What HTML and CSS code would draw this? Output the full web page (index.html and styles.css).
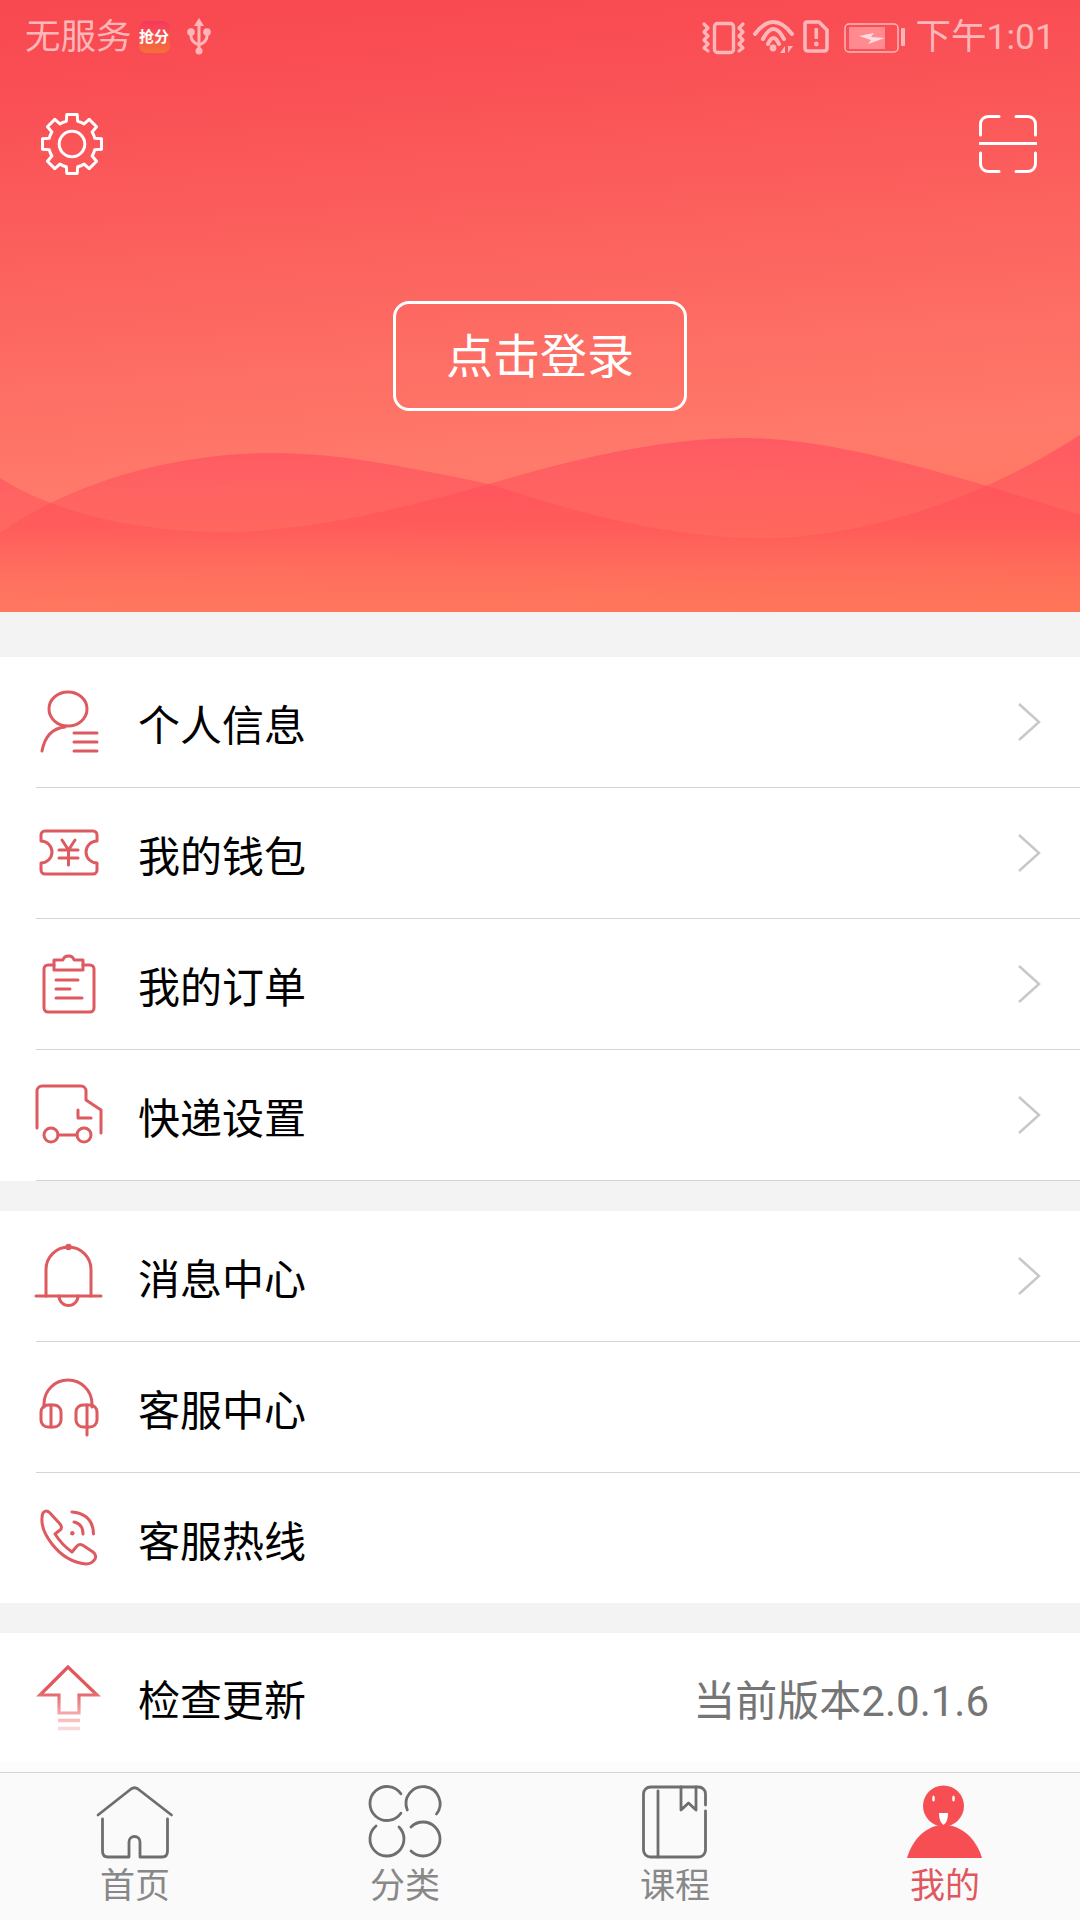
FILE: index.html
```html
<!DOCTYPE html>
<html lang="zh-CN">
<head>
  <meta charset="UTF-8" />
  <meta name="viewport" content="width=device-width, initial-scale=1.0" />
  <title>我的</title>
  <link rel="stylesheet" href="styles.css">
</head>
<body>

  <div class="page">
    <header class="header">
      <svg class="waves" viewBox="0 0 1080 612">
        <defs>
          <linearGradient id="waveFill" gradientUnits="userSpaceOnUse" x1="0" y1="430" x2="0" y2="612">
            <stop offset="0" stop-color="#ff4560" stop-opacity="0.62" />
            <stop offset="0.55" stop-color="#ff4d55" stop-opacity="0.4" />
            <stop offset="1" stop-color="#ff6a55" stop-opacity="0" />
          </linearGradient>
        </defs>
        <path fill="url(#waveFill)" d="M0 533 C60 490 160 453 275 453 C340 453 412 468 489 484 C600 520 680 538 764 538 C860 538 980 500 1080 435 V612 H0 Z" />
        <path fill="url(#waveFill)" d="M0 478 C50 510 130 532 227 532 C300 532 400 510 489 484 C570 460 660 438 744 438 C830 438 940 470 1080 515 V612 H0 Z" />
      </svg>

      <div class="status-bar">
        <div class="status-left">
          <span class="status-text">无服务</span>
          <span class="app-badge">抢分</span>
          <svg class="usb" viewBox="0 0 28 38">
            <path fill="#ffb6b8" d="M14 0 L9 8 H19 Z" />
            <circle cx="14" cy="33" r="3.5" fill="#ffb6b8" />
            <circle cx="6" cy="14" r="3.8" fill="#ffb6b8" />
            <circle cx="22" cy="14" r="3.8" fill="#ffb6b8" />
            <path fill="none" stroke="#ffb6b8" stroke-width="3" d="M14 6 V33 M6 14 V18 Q6 24 14 27 M22 14 V18 Q22 24 14 27" />
          </svg>
        </div>
        <div class="status-right">
          <svg class="status-icons" viewBox="0 0 206 40">
            <g fill="none" stroke="#ffb6b8" stroke-linecap="round" stroke-linejoin="round">
              <rect x="13.5" y="6.5" width="19" height="29" rx="3" stroke-width="3.4" />
              <path stroke-width="3.2" d="M3 7 L7 11 L3 15 L7 19 L3 23 L7 27 L3 31 L7 34" />
              <path stroke-width="3.2" d="M42 7 L38 11 L42 15 L38 19 L42 23 L38 27 L42 31 L38 34" />
              <path stroke-width="4" d="M54 17 Q72.5 -7 91 17 M62 22 Q72.5 2 83 22 M67 27 Q72.5 15 78 27" />
              <path stroke-width="3.6" d="M106 5 H118 L126 13 V31 Q126 34 123 34 H107 Q104 34 104 31 V7 Q104 5 106 5 Z" />
              <rect x="144" y="7" width="53" height="28" rx="4" stroke-width="1.5" />
            </g>
            <g fill="#ffb6b8">
              <circle cx="72" cy="31" r="3.4" />
              <path d="M84 29 L79 36 H84 Z M87 29 L92 29 L87 36 Z" />
              <rect x="113.5" y="11" width="3.6" height="11" rx="1" />
              <circle cx="115.3" cy="27" r="2.4" />
              <rect x="200" y="11" width="4" height="18" rx="1" />
            </g>
            <rect x="148" y="10" width="36" height="22" fill="#ff8b90" />
            <path fill="#ffdcdd" d="M158 19 L173 16 L170 20 L184 21 L167 27 L170 23 Z" />
          </svg>
          <span class="status-text">下午1:01</span>
        </div>
      </div>

      <div class="toolbar">
        <svg class="gear" viewBox="0 0 64 64" fill="none" stroke="#fff" stroke-width="3" stroke-linejoin="round">
          <path d="M26.3 9.2 L26.8 2.5 H37.2 L37.7 9.2 A23.5 23.5 0 0 1 44.1 11.9 L49.2 7.4 L56.6 14.8 L52.1 19.9 A23.5 23.5 0 0 1 54.8 26.3 L61.5 26.8 V37.2 L54.8 37.7 A23.5 23.5 0 0 1 52.1 44.1 L56.6 49.2 L49.2 56.6 L44.1 52.1 A23.5 23.5 0 0 1 37.7 54.8 L37.2 61.5 H26.8 L26.3 54.8 A23.5 23.5 0 0 1 19.9 52.1 L14.8 56.6 L7.4 49.2 L11.9 44.1 A23.5 23.5 0 0 1 9.2 37.7 L2.5 37.2 V26.8 L9.2 26.3 A23.5 23.5 0 0 1 11.9 19.9 L7.4 14.8 L14.8 7.4 L19.9 11.9 A23.5 23.5 0 0 1 26.3 9.2 Z" />
          <circle cx="32" cy="32" r="12.8" />
        </svg>
        <svg class="scan" viewBox="0 0 58 58" fill="none" stroke="#fff" stroke-width="3" stroke-linecap="round">
          <path d="M1.5 20 V9 A7.5 7.5 0 0 1 9 1.5 H20" />
          <path d="M37 1.5 H49 A7.5 7.5 0 0 1 56.5 9 V20" />
          <path d="M1 28.5 H57" />
          <path d="M1.5 38 V49 A7.5 7.5 0 0 0 9 56.5 H20" />
          <path d="M37 56.5 H49 A7.5 7.5 0 0 0 56.5 49 V38" />
        </svg>
      </div>

      <div class="login-wrap">
        <div class="login-btn">点击登录</div>
      </div>
    </header>

    <section class="group">
      <div class="row">
        <svg class="row-icon" viewBox="0 0 66 66">
          <ellipse cx="32" cy="20" rx="19" ry="17" />
          <path d="M29 38 Q10 40 6 62 M38 44 H61 M38 53 H61 M38 62 H61" />
        </svg>
        <span class="row-label">个人信息</span>
        <svg class="chevron" viewBox="0 0 24 40"><path d="M2 2 L22 20 L2 38" /></svg>
      </div>
      <div class="row">
        <svg class="row-icon" viewBox="0 0 66 66">
          <path d="M9 11 H57 A4 4 0 0 1 61 15 V21 A10.5 10.5 0 0 0 61 43 V50 A4 4 0 0 1 57 54 H9 A4 4 0 0 1 5 50 V43 A10.5 10.5 0 0 0 5 21 V15 A4 4 0 0 1 9 11 Z" />
          <path d="M26 20 L32.5 30 L39 20 M23 30 H42 M23 38 H42 M32.5 30 V45" />
        </svg>
        <span class="row-label">我的钱包</span>
        <svg class="chevron" viewBox="0 0 24 40"><path d="M2 2 L22 20 L2 38" /></svg>
      </div>
      <div class="row">
        <svg class="row-icon" viewBox="0 0 66 66">
          <path d="M18 14 H12 A4 4 0 0 0 8 18 V57 A4 4 0 0 0 12 61 H54 A4 4 0 0 0 58 57 V18 A4 4 0 0 0 54 14 H47" />
          <path d="M18 9 H27 Q28 5 32.5 5 Q37 5 38 9 H47 V19 H18 Z" />
          <path d="M20 29 H42 M20 38 H34 M20 47 H46" />
        </svg>
        <span class="row-label">我的订单</span>
        <svg class="chevron" viewBox="0 0 24 40"><path d="M2 2 L22 20 L2 38" /></svg>
      </div>
      <div class="row">
        <svg class="row-icon" viewBox="0 0 66 66">
          <path d="M1 46 V9 A5 5 0 0 1 6 4 H45 A5 5 0 0 1 50 9 V18 L65 28 V51" />
          <path d="M42 28 V36 H55" />
          <circle cx="15" cy="53" r="7" />
          <circle cx="48" cy="53" r="7" />
          <path d="M22 53 H41" />
        </svg>
        <span class="row-label">快递设置</span>
        <svg class="chevron" viewBox="0 0 24 40"><path d="M2 2 L22 20 L2 38" /></svg>
      </div>
    </section>

    <section class="group">
      <div class="row">
        <svg class="row-icon" viewBox="0 0 66 66">
          <path d="M10 53 V26.5 A22.5 22.5 0 0 1 55 26.5 V53" />
          <path d="M0 53 H65" />
          <path d="M23 53 A9.5 9.5 0 0 0 42 53" />
          <circle class="solid" cx="32.5" cy="4" r="3.2" />
        </svg>
        <span class="row-label">消息中心</span>
        <svg class="chevron" viewBox="0 0 24 40"><path d="M2 2 L22 20 L2 38" /></svg>
      </div>
      <div class="row">
        <svg class="row-icon" viewBox="0 0 66 66">
          <path d="M8 33 V30 A24 24 0 0 1 56 30 V33" />
          <rect x="5" y="31" width="20" height="22" rx="7" />
          <rect x="40" y="31" width="21" height="22" rx="7" />
          <path d="M15 31 V53 M51 31 V61" />
        </svg>
        <span class="row-label">客服中心</span>
      </div>
      <div class="row row-last">
        <svg class="row-icon" viewBox="0 0 66 66">
          <path d="M7 8 Q10 4 14 8 L24 19 Q27 23 24 25 L19 29 Q26 40 36 47 L41 41 Q44 38 48 41 L57 47 Q61 50 59 54 Q56 59 50 59 Q30 57 16 39 Q5 25 6 13 Q6 10 7 8 Z" />
          <path d="M38 17 Q47 19 47 29 M36 7 Q57 9 57.5 29" />
          <circle class="solid" cx="36.3" cy="28.3" r="2.2" />
        </svg>
        <span class="row-label">客服热线</span>
      </div>
    </section>

    <section class="group">
      <div class="row row-update">
        <svg class="row-icon" viewBox="0 0 66 66">
          <defs>
            <linearGradient id="fade" gradientUnits="userSpaceOnUse" x1="0" y1="24" x2="0" y2="62">
              <stop offset="0" stop-color="#e2575e" />
              <stop offset="1" stop-color="#fbd6d8" />
            </linearGradient>
          </defs>
          <path stroke="url(#fade)" stroke-width="3.2" stroke-linejoin="miter" d="M32 2 L4 30 H23 V48 H43 V30 H61 Z" />
          <path stroke="url(#fade)" stroke-width="3.6" stroke-linecap="butt" d="M22 55.5 H44 M22 63.5 H44" />
        </svg>
        <span class="row-label">检查更新</span>
        <span class="version">当前版本2.0.1.6</span>
      </div>
    </section>
    <div class="list-end"></div>

    <nav class="tabbar">
      <div class="tab">
        <svg class="tab-icon" viewBox="0 0 76 72">
          <path d="M1 29 L34 3 Q37.5 0.5 41 3 L74.5 29" />
          <path d="M5.5 33 V65 Q5.5 71 11 71 H32 V56 A5.5 5.5 0 0 1 43 56 V71 H65 Q70.5 71 70.5 65 V33" />
        </svg>
        <span class="tab-label">首页</span>
      </div>
      <div class="tab">
        <svg class="tab-icon" viewBox="0 0 76 72">
          <path d="M33.9 7.75 A17 17 0 1 0 33.9 27.25" />
          <path d="M40.3 24 A17 17 0 1 1 69.5 28" />
          <path d="M9 40 A17 17 0 1 0 32 41" />
          <path d="M44 41 A17 17 0 1 1 44 65" />
        </svg>
        <span class="tab-label">分类</span>
      </div>
      <div class="tab">
        <svg class="tab-icon" viewBox="0 0 76 72">
          <path d="M68.5 19 V8 A7 7 0 0 0 61.5 1 H13.5 A7 7 0 0 0 6.5 8 V64 A7 7 0 0 0 13.5 71 H61.5 A7 7 0 0 0 68.5 64 V25" />
          <path d="M21 5 V71" />
          <path d="M44 1 V24 L51.5 17 L59 24 V1" />
        </svg>
        <span class="tab-label">课程</span>
      </div>
      <div class="tab active">
        <svg class="tab-icon" viewBox="0 0 76 72">
          <circle class="me" cx="36.5" cy="20" r="20.5" />
          <path class="me" d="M0 72 C6 52 20 39 37 39 C54 39 69 52 75 72 Z" />
          <ellipse class="me-face" cx="26.5" cy="12.5" rx="1.3" ry="3" />
          <ellipse class="me-face" cx="46.5" cy="12.5" rx="1.3" ry="3" />
          <path class="me-face" d="M32 27 H41 Q41 36 36.5 39 Q32 36 32 27 Z" />
        </svg>
        <span class="tab-label">我的</span>
      </div>
    </nav>
  </div>

</body>
</html>
```

FILE: styles.css
```css
* {
  box-sizing: border-box;
}
body {
  margin: 0;
  background: #f3f3f3;
  font-family: Roboto, "Noto Sans CJK SC", sans-serif;
}
.page {
  display: flex;
  flex-direction: column;
  width: 1080px;
  height: 1920px;
  overflow: hidden;
}

/* header */
.header {
  position: relative;
  height: 612px;
  margin-bottom: 45px;
  background: linear-gradient(176deg, #f94850 0%, #f94c53 10%, #ff7a6a 73%, #ff7558 100%);
}
.waves {
  position: absolute;
  left: 0;
  top: 0;
  width: 1080px;
  height: 612px;
}
.status-bar {
  position: relative;
  display: flex;
  justify-content: space-between;
  align-items: center;
  height: 74px;
  padding: 0 25px 0 25px;
}
.status-left,
.status-right {
  display: flex;
  align-items: center;
}
.status-text {
  font-size: 35.5px;
  color: #ffb6b8;
  line-height: 40px;
}
.app-badge {
  width: 31px;
  height: 32px;
  margin-left: 7px;
  border-radius: 7px;
  background: linear-gradient(180deg, #f5385c, #f6703a);
  color: #fff;
  font-size: 15px;
  font-weight: 700;
  line-height: 32px;
  text-align: center;
  white-space: nowrap;
  overflow: hidden;
}
.usb {
  width: 28px;
  height: 38px;
  margin-left: 15px;
}
.status-icons {
  width: 206px;
  height: 40px;
  margin-right: 9px;
}
.toolbar {
  position: relative;
  display: flex;
  justify-content: space-between;
  align-items: center;
  height: 70px;
  margin-top: 35px;
  padding: 0 43px 0 40px;
}
.gear {
  width: 64px;
  height: 64px;
}
.scan {
  width: 58px;
  height: 58px;
}
.login-wrap {
  position: relative;
  display: flex;
  justify-content: center;
  margin-top: 122px;
}
.login-btn {
  width: 294px;
  height: 110px;
  border: 3px solid #fff;
  border-radius: 16px;
  color: #fff;
  font-size: 47px;
  line-height: 106px;
  text-align: center;
}

/* list */
.group {
  margin-bottom: 30px;
  background: #fff;
}
.group:last-of-type {
  margin-bottom: 0;
}
.row {
  display: flex;
  align-items: center;
  height: 131px;
  margin-left: 36px;
  padding-right: 39px;
  border-bottom: 1px solid #d4d4d4;
}
.row-last {
  height: 130px;
  border-bottom: none;
}
.row-update {
  height: 129px;
  padding-right: 91px;
  border-bottom: none;
}
.row-icon {
  flex: none;
  width: 66px;
  height: 66px;
  overflow: visible;
  fill: none;
  stroke: #dd5a60;
  stroke-width: 3;
  stroke-linecap: round;
  stroke-linejoin: round;
}
.row-icon .solid {
  fill: #dd5a60;
  stroke: none;
}
.row-label {
  flex: 1;
  margin-left: 36px;
  font-size: 42px;
  color: #000;
}
.chevron {
  width: 24px;
  height: 40px;
  fill: none;
  stroke: #c8c8c8;
  stroke-width: 2.5;
}
.version {
  font-size: 42px;
  color: #757575;
}
.list-end {
  height: 10px;
  background: #fcfcfc;
}

/* bottom tabs */
.tabbar {
  flex: 1;
  display: grid;
  grid-template-columns: repeat(4, 270px);
  border-top: 1px solid #d4d4d4;
  background: #fafafa;
}
.tab {
  display: flex;
  flex-direction: column;
  align-items: center;
  padding-top: 13px;
}
.tab-icon {
  width: 76px;
  height: 72px;
  overflow: visible;
  fill: none;
  stroke: #6e6e6e;
  stroke-width: 2.8;
  stroke-linecap: round;
  stroke-linejoin: round;
}
.tab-label {
  margin-top: 9px;
  font-size: 35px;
  line-height: 40px;
  color: #888;
}
.tab.active .tab-label {
  color: #e0585e;
}
.tab-icon .me {
  fill: #f74e54;
  stroke: none;
}
.tab-icon .me-face {
  fill: #fff;
  stroke: none;
}
```
